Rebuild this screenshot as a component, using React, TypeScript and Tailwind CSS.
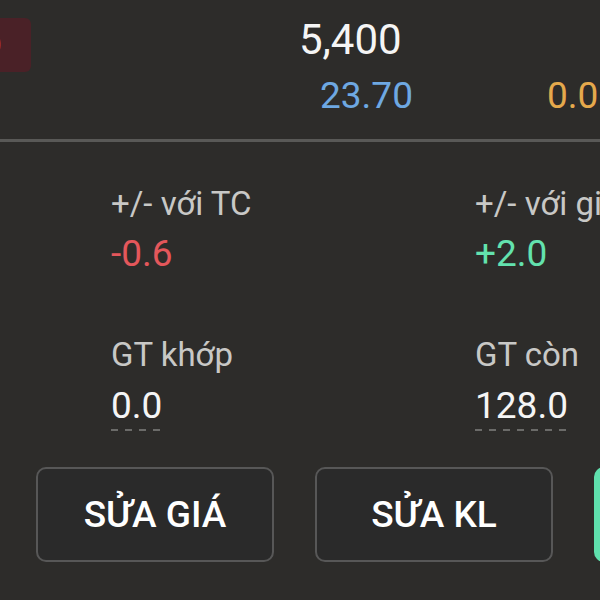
import React from "react";

function Field({ label, value, valueClass, dashed }: { label: string; value: string; valueClass: string; dashed?: boolean }) {
  return (
    <div className="flex flex-col items-start">
      <div className="text-[33px] leading-none h-[32px] text-[#c8c8c6]">{label}</div>
      <div className={`inline-flex flex-col ${dashed ? "mt-[17px]" : "mt-[16px]"}`}>
        <div className={`text-[37px] leading-none h-[37px] ${valueClass}`}>{value}</div>
        {dashed && (
          <div className="mt-[5px] h-[2px] w-full bg-[repeating-linear-gradient(90deg,#6b6b69_0px,#6b6b69_7px,transparent_7px,transparent_14px)]" />
        )}
      </div>
    </div>
  );
}

export default function App() {
  return (
    <div className="w-[600px] h-[600px] overflow-hidden bg-[#2d2c2a] font-['Roboto',sans-serif] flex flex-col">
      <div className="flex h-[139px] shrink-0">
        <div className="mt-[18px] h-[54px] w-[31px] shrink-0 rounded-r-[6px] bg-[#4a2127] overflow-hidden flex items-center">
          <span className="ml-[-10px] text-[20px] leading-none text-[#d8485c]">0</span>
        </div>
        <div className="flex flex-col">
          <div className="ml-[268px] mt-[19px] text-[42px] leading-none h-[42px] text-[#f5f5f5]">5,400</div>
          <div className="flex mt-[16px] ml-[289px] text-[37px] leading-none h-[37px] whitespace-nowrap">
            <span className="text-[#6ea8e2]">23.70</span>
            <span className="ml-[134px] text-[#e5a94c]">0.0</span>
          </div>
        </div>
      </div>
      <div className="h-[3px] bg-[#595957] shrink-0" />
      <div className="pl-[111px] pt-[45px] grid grid-cols-[364px_1fr] whitespace-nowrap">
        <Field label="+/- với TC" value="-0.6" valueClass="text-[#e4575b]" />
        <Field label="+/- với giá" value="+2.0" valueClass="text-[#63e2ae]" />
        <div className="mt-[66px]">
          <Field label="GT khớp" value="0.0" valueClass="text-[#f5f5f5]" dashed />
        </div>
        <div className="mt-[66px]">
          <Field label="GT còn" value="128.0" valueClass="text-[#f5f5f5]" dashed />
        </div>
      </div>
      <div className="flex gap-[41px] pl-[36px] mt-[36px]">
        <button className="w-[238px] h-[95px] shrink-0 rounded-[10px] border-2 border-[#575757] bg-[#2a2a2a] text-white text-[37px] font-medium leading-none">
          SỬA GIÁ
        </button>
        <button className="w-[238px] h-[95px] shrink-0 rounded-[10px] border-2 border-[#575757] bg-[#2a2a2a] text-white text-[37px] font-medium leading-none">
          SỬA KL
        </button>
        <div className="w-[60px] h-[95px] shrink-0 rounded-[10px] bg-[#5fe0ad]" />
      </div>
    </div>
  );
}
